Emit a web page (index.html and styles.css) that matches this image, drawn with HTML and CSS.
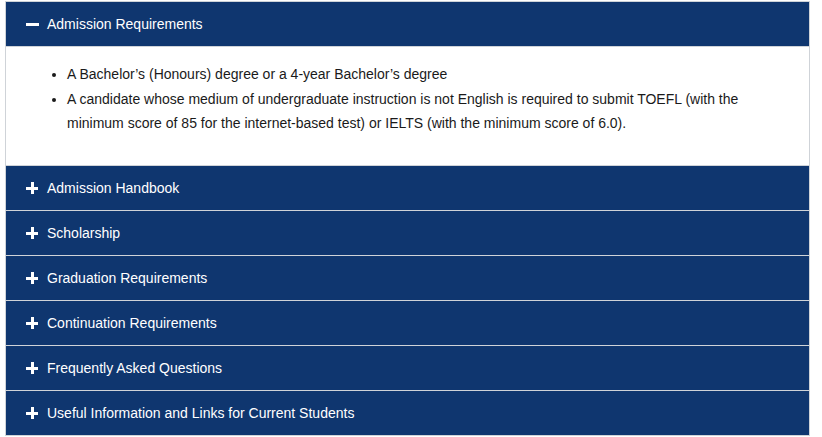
FILE: index.html
```html
<!DOCTYPE html>
<html lang="en">
<head>
<meta charset="utf-8">
<title>Accordion</title>
<link rel="stylesheet" href="styles.css">
</head>
<body>
<div class="accordion">
  <div class="item open">
    <div class="head"><span class="icon minus"></span><span class="label">Admission Requirements</span></div>
    <div class="body">
      <ul>
        <li>A Bachelor’s (Honours) degree or a 4-year Bachelor’s degree</li>
        <li>A candidate whose medium of undergraduate instruction is not English is required to submit TOEFL (with the minimum score of 85 for the internet-based test) or IELTS (with the minimum score of 6.0).</li>
      </ul>
    </div>
  </div>
  <div class="item"><div class="head"><span class="icon plus"></span><span class="label">Admission Handbook</span></div></div>
  <div class="item"><div class="head"><span class="icon plus"></span><span class="label">Scholarship</span></div></div>
  <div class="item"><div class="head"><span class="icon plus"></span><span class="label">Graduation Requirements</span></div></div>
  <div class="item"><div class="head"><span class="icon plus"></span><span class="label">Continuation Requirements</span></div></div>
  <div class="item"><div class="head"><span class="icon plus"></span><span class="label">Frequently Asked Questions</span></div></div>
  <div class="item"><div class="head"><span class="icon plus"></span><span class="label">Useful Information and Links for Current Students</span></div></div>
</div>
</body>
</html>
```

FILE: styles.css
```css
html, body {
  margin: 0;
  padding: 0;
  background: #ffffff;
}
body {
  padding: 1px 12px 0 5px;
  font-family: "Liberation Sans", Arial, Helvetica, sans-serif;
  font-size: 14px;
  color: #1a1a1a;
}
.accordion {
  width: 803px;
  border: 1px solid #cfd3d8;
  border-bottom: none;
}
.item {
  border-bottom: 1px solid #cfd3d8;
}
.head {
  height: 44px;
  background: #0f366f;
  color: #ffffff;
  display: flex;
  align-items: center;
  padding-left: 20px;
  box-sizing: border-box;
}
.label {
  margin-left: 9px;
  font-size: 14px;
}
.icon {
  width: 12px;
  height: 12px;
  position: relative;
  flex: none;
}
.icon::before,
.icon::after {
  content: "";
  position: absolute;
  background: #ffffff;
}
.icon::before {
  left: 0;
  right: 0;
  top: 5px;
  height: 2.5px;
}
.plus::after {
  top: 0;
  bottom: 0;
  left: 5px;
  width: 2.5px;
}
.minus::before {
  left: -0.5px;
  right: -0.5px;
}
.body {
  height: 119px;
  border-top: 1px solid #cfd3d8;
  box-sizing: border-box;
  padding-top: 15px;
}
.body ul {
  margin: 0;
  padding-left: 61px;
  padding-right: 34px;
  line-height: 24.5px;
}
.body li {
  margin: 0;
}
```
